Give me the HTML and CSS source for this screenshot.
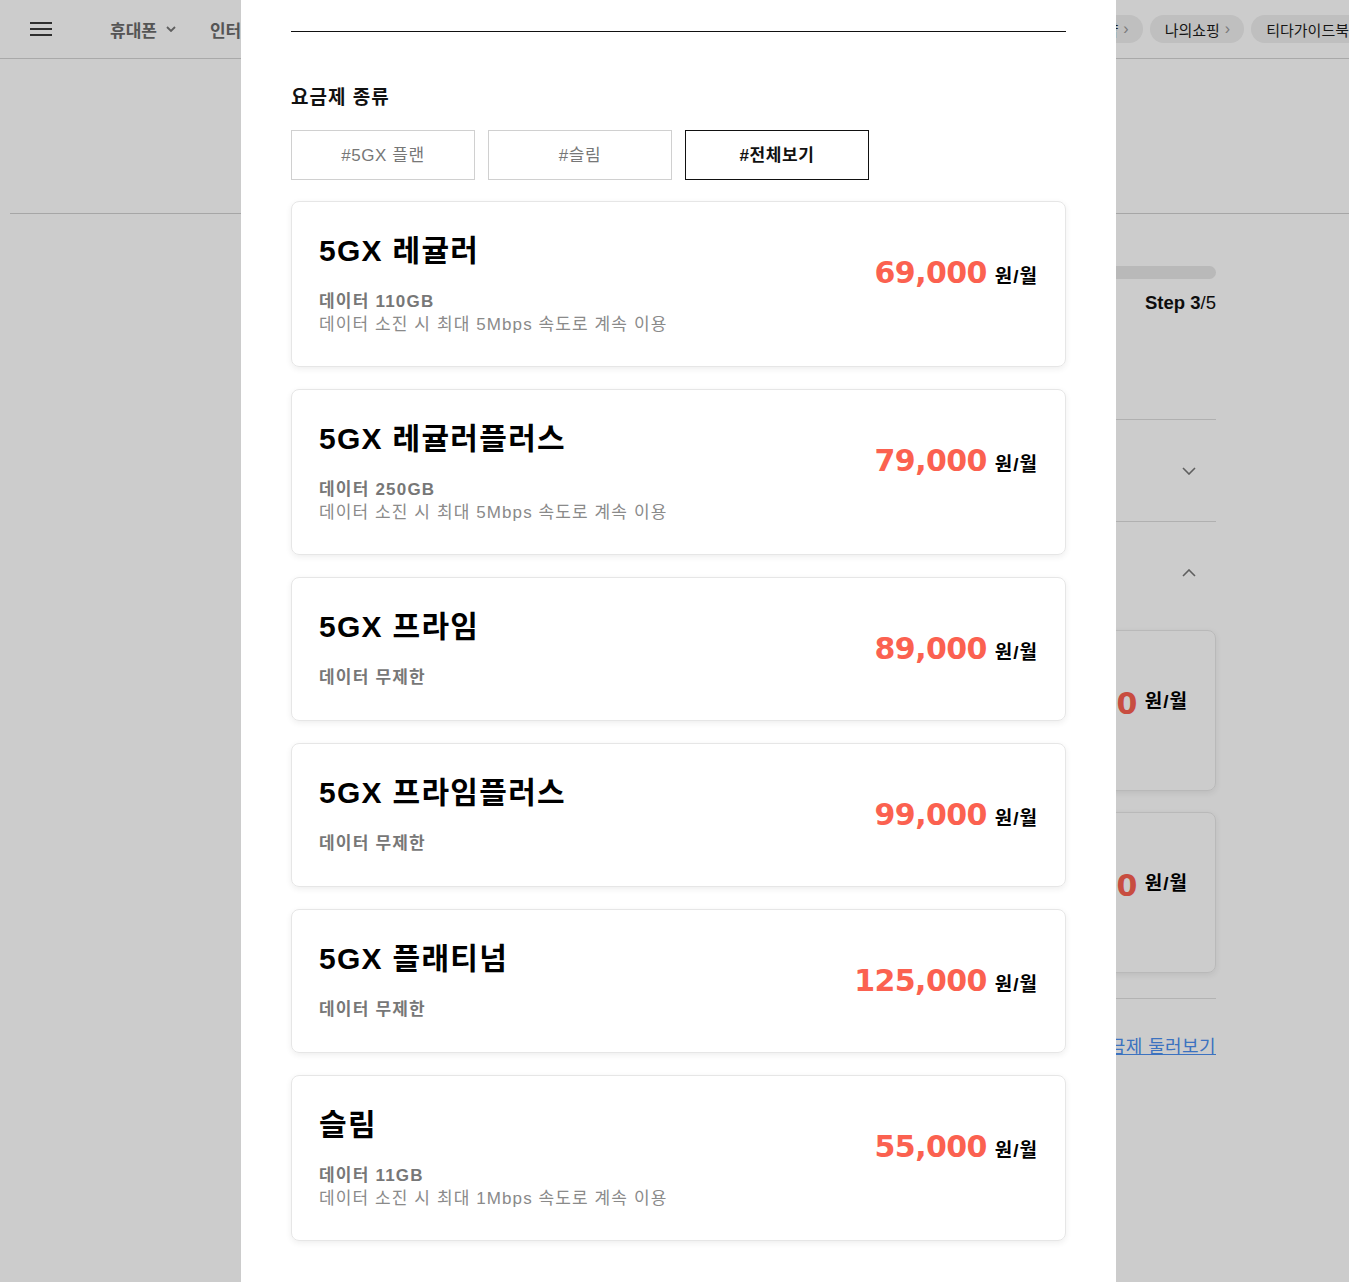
FILE: index.html
```html
<!DOCTYPE html>
<html lang="ko">
<head>
<meta charset="utf-8">
<title>요금제 선택</title>
<link rel="stylesheet" href="styles.css">
</head>
<body>
<header class="gnb">
  <button class="menu-btn" aria-label="메뉴">
    <span></span><span></span><span></span>
  </button>
  <nav class="gnb-nav">
    <a class="gnb-item">휴대폰 <svg class="caret" viewBox="0 0 10 6" width="10" height="6"><path d="M1 1l4 4 4-4" fill="none" stroke="currentColor" stroke-width="1.8"/></svg></a>
    <a class="gnb-item">인터넷/TV</a>
  </nav>
  <div class="gnb-pills">
    <a class="pill">T다이렉트샵 <span class="arr">›</span></a>
    <a class="pill">나의쇼핑 <span class="arr">›</span></a>
    <a class="pill">티다가이드북</a>
  </div>
</header>

<main class="page">
  <div class="page-head"></div>
  <div class="page-body">
    <section class="side">
      <div class="progress"><div class="progress-fill"></div></div>
      <p class="step"><b>Step 3</b>/5</p>
      <div class="acc acc-first">
        <span class="acc-title">기기 선택</span>
        <svg class="chev" viewBox="0 0 14 8" width="14" height="8"><path d="M1 1l6 6 6-6" fill="none" stroke="currentColor" stroke-width="1.6"/></svg>
      </div>
      <div class="acc">
        <span class="acc-title">요금제 선택</span>
        <svg class="chev" viewBox="0 0 14 8" width="14" height="8"><path d="M1 7l6-6 6 6" fill="none" stroke="currentColor" stroke-width="1.6"/></svg>
      </div>
      <div class="side-cards">
        <div class="side-card"><span class="price">69,000</span><span class="unit">원/월</span></div>
        <div class="side-card"><span class="price">79,000</span><span class="unit">원/월</span></div>
      </div>
      <div class="side-foot"><a class="side-link">다른 요금제 둘러보기</a></div>
    </section>
  </div>
</main>

<div class="dim"></div>

<div class="modal" role="dialog">
  <div class="modal-inner">
    <div class="modal-rule"></div>
    <h2 class="modal-title">요금제 종류</h2>
    <div class="tabs">
      <button class="tab">#5GX 플랜</button>
      <button class="tab">#슬림</button>
      <button class="tab tab-on">#전체보기</button>
    </div>
    <ul class="plans">
      <li class="plan">
        <div class="plan-info">
          <h3 class="plan-name">5GX 레귤러</h3>
          <p class="plan-data">데이터 110GB</p>
          <p class="plan-sub">데이터 소진 시 최대 5Mbps 속도로 계속 이용</p>
        </div>
        <div class="plan-price"><span class="price">69,000</span><span class="unit">원/월</span></div>
      </li>
      <li class="plan">
        <div class="plan-info">
          <h3 class="plan-name">5GX 레귤러플러스</h3>
          <p class="plan-data">데이터 250GB</p>
          <p class="plan-sub">데이터 소진 시 최대 5Mbps 속도로 계속 이용</p>
        </div>
        <div class="plan-price"><span class="price">79,000</span><span class="unit">원/월</span></div>
      </li>
      <li class="plan">
        <div class="plan-info">
          <h3 class="plan-name">5GX 프라임</h3>
          <p class="plan-data">데이터 무제한</p>
        </div>
        <div class="plan-price"><span class="price">89,000</span><span class="unit">원/월</span></div>
      </li>
      <li class="plan">
        <div class="plan-info">
          <h3 class="plan-name">5GX 프라임플러스</h3>
          <p class="plan-data">데이터 무제한</p>
        </div>
        <div class="plan-price"><span class="price">99,000</span><span class="unit">원/월</span></div>
      </li>
      <li class="plan">
        <div class="plan-info">
          <h3 class="plan-name">5GX 플래티넘</h3>
          <p class="plan-data">데이터 무제한</p>
        </div>
        <div class="plan-price"><span class="price">125,000</span><span class="unit">원/월</span></div>
      </li>
      <li class="plan">
        <div class="plan-info">
          <h3 class="plan-name">슬림</h3>
          <p class="plan-data">데이터 11GB</p>
          <p class="plan-sub">데이터 소진 시 최대 1Mbps 속도로 계속 이용</p>
        </div>
        <div class="plan-price"><span class="price">55,000</span><span class="unit">원/월</span></div>
      </li>
    </ul>
  </div>
</div>
</body>
</html>
```

FILE: styles.css
```css
* { box-sizing: border-box; }
html, body { margin: 0; padding: 0; }
body {
  font-family: "Liberation Sans", "Noto Sans CJK KR", sans-serif;
  color: #111;
  background: #fff;
  height: 1282px;
  overflow: hidden;
}
a { text-decoration: none; color: inherit; }
button { font-family: inherit; }
ul, p, h2, h3 { margin: 0; padding: 0; }
li { list-style: none; }

/* ---------- background page ---------- */
.gnb {
  height: 59px;
  display: flex;
  align-items: center;
  border-bottom: 1px solid #d4d4d4;
  padding-left: 30px;
  overflow: hidden;
}
.menu-btn {
  width: 22px; height: 14px;
  border: 0; padding: 0; background: none;
  display: flex; flex-direction: column; justify-content: space-between;
}
.menu-btn span { display: block; height: 2px; background: #3a3a3a; }
.gnb-nav { display: flex; gap: 34px; margin-left: 58px; }
.gnb-item {
  font-size: 17px; font-weight: 700; color: #6b6b6b;
  display: flex; align-items: center; gap: 9px;
}
.caret { color: #777; }
.gnb-pills { margin-left: auto; display: flex; gap: 7px; margin-right: -14px; flex-shrink: 0; }
.pill {
  height: 28px; border-radius: 14px; background: #efefef;
  padding: 0 14px 0 15px; display: flex; align-items: center;
  font-size: 15px; color: #1c1c1c; white-space: nowrap;
}
.pill .arr { color: #999; margin-left: 5px; font-size: 16px; }

.page { padding-left: 10px; }
.page-head { height: 155px; border-bottom: 1px solid #d0d0d0; }
.page-body { display: flex; justify-content: flex-end; padding-right: 133px; }
.side { width: 520px; padding-top: 52px; }
.progress { height: 13px; border-radius: 7px; background: #e8e8e8; }
.progress-fill { width: 60%; height: 100%; border-radius: 7px; background: #e8e8e8; }
.step { text-align: right; font-size: 18.5px; margin-top: 13px; line-height: 22px; color: #111; }
.step b { font-weight: 700; }
.acc {
  border-top: 1px solid #dcdcdc;
  height: 102px;
  display: flex; align-items: center; justify-content: space-between;
  padding-right: 20px;
}
.acc-first { margin-top: 105px; }
.acc-title { font-size: 18px; font-weight: 700; }
.chev { color: #777; }
.side-cards { display: flex; flex-direction: column; gap: 21px; margin-top: 7px; }
.side-card {
  height: 161px; border: 1px solid #e8e8e8; border-radius: 8px;
  box-shadow: 0 2px 6px rgba(0,0,0,.08);
  display: flex; justify-content: flex-end; align-items: flex-start;
  padding: 55px 27px 0;
}
.side-foot { border-top: 1px solid #e0e0e0; margin-top: 25px; padding-top: 33px; text-align: right; }
.side-link { font-size: 18px; color: #4b8ff0; text-decoration: underline; letter-spacing: 0.4px; }

/* ---------- dim + modal ---------- */
.dim { position: fixed; inset: 0; background: rgba(0,0,0,.2); }
.modal {
  position: fixed; top: 0; left: 241px;
  width: 875px; height: 1282px;
  background: #fff; overflow: hidden;
}
.modal-inner { padding: 0 50px; }
.modal-rule { height: 32px; border-bottom: 1px solid #111; }
.modal-title {
  font-size: 19px; font-weight: 700; line-height: 28px; letter-spacing: 1px;
  margin-top: 52px; color: #111;
}
.tabs { display: flex; gap: 13px; margin-top: 18px; }
.tab {
  width: 184px; height: 50px; background: #fff;
  border: 1px solid #d0d0d0; font-size: 17px; color: #777; padding: 0 0 3px;
  letter-spacing: 0.6px;
}
.tab-on { border-color: #111; color: #111; font-weight: 700; }

.plans { margin-top: 21px; display: flex; flex-direction: column; gap: 22px; }
.plan {
  display: flex; justify-content: space-between; align-items: flex-start;
  border: 1px solid #e6e6e6; border-radius: 8px;
  box-shadow: 0 2px 6px rgba(0,0,0,.07);
  padding: 29px 27px 31px;
}
.plan-name { font-size: 30px; line-height: 40px; font-weight: 700; color: #000; letter-spacing: 1.3px; }
.plan-data { margin-top: 19px; font-size: 17px; line-height: 23px; font-weight: 700; color: #777; letter-spacing: 1.2px; }
.plan-sub { font-size: 17px; line-height: 23px; color: #8a8a8a; letter-spacing: 1.1px; margin-bottom: -1px; }
.plan-price { margin-top: 24px; display: flex; align-items: baseline; }
.price {
  font-family: "DejaVu Sans", sans-serif;
  font-size: 30px; line-height: 36px; font-weight: 700; color: #fb6150;
  letter-spacing: -0.6px;
}
.unit { font-size: 19px; font-weight: 700; color: #000; margin-left: 8px; letter-spacing: 1px; }
```
